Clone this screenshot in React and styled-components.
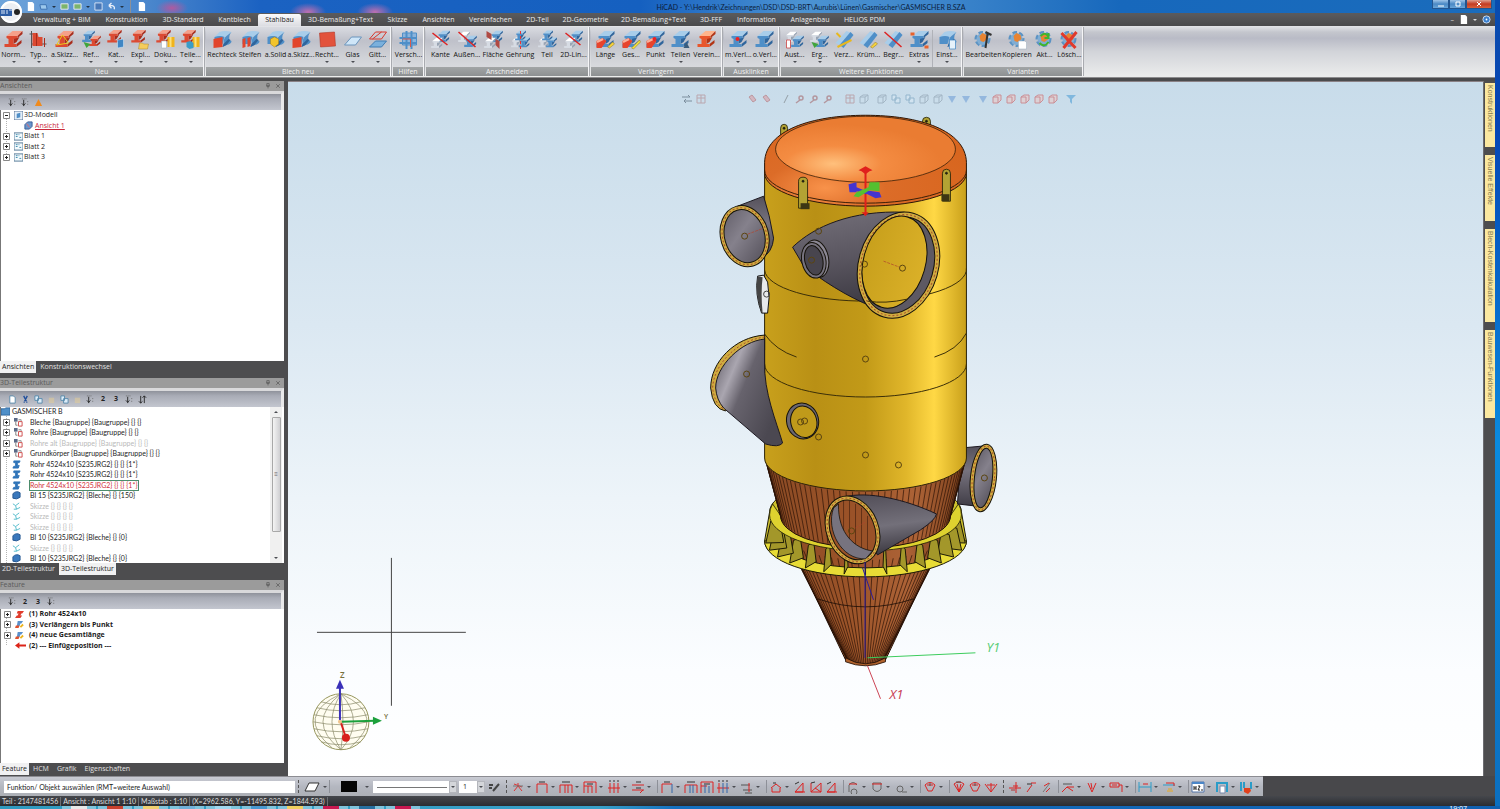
import React from 'react';
import styled, { createGlobalStyle } from 'styled-components';

const GlobalStyle = createGlobalStyle`
  * { box-sizing: border-box; }
  body {
    margin: 0;
    background: #4b4b4d;
    font-family: "Open Sans", "Noto Sans", sans-serif;
    font-size: 7px;
    line-height: 10px;
    color: #1c1c1c;
  }
  button, input, select {
    font: inherit;
    color: inherit;
    border: none;
    background: none;
    padding: 0;
    margin: 0;
    border-radius: 0;
  }
  svg { display: block; flex: none; }
`;

/* ---------- shell ---------- */

const Desktop = styled.div`
  height: 100vh;
  display: flex;
  flex-direction: column;
  overflow: hidden;
`;

const Screen = styled.div`
  flex: 1;
  min-height: 0;
  display: flex;
  background: linear-gradient(#0a4cae, #0645b4 15%, #0a8ade 55%, #0b6fc0);
`;

const Window = styled.div`
  flex: 1;
  min-width: 0;
  margin-right: 5px;
  display: flex;
  flex-direction: column;
  position: relative;
  background: #4b4b4d;
`;

const TitleBar = styled.header`
  height: 13px;
  display: flex;
  align-items: center;
  background:
    radial-gradient(ellipse 18px 9px at 308px 12px, #c070b0 0, transparent 100%),
    radial-gradient(ellipse 18px 9px at 375px 12px, #c070b0 0, transparent 100%),
    radial-gradient(ellipse 16px 8px at 172px 8px, #b05aa0 0, transparent 100%),
    linear-gradient(90deg, #6fa4da 0, #4a86cc 150px, #1b62c2 260px, #1560c0 640px, #4c93d2 800px, #3a83ca 960px, #1768bc 1120px, #1a6cbc);
`;

const QuickBar = styled.div`
  display: flex;
  align-items: center;
  gap: 4px;
  width: 200px;
  padding-left: 26px;
`;

const TitleText = styled.h1`
  flex: 1;
  margin: 0;
  padding-right: 10px;
  text-align: center;
  font-family: Lato, "Open Sans", sans-serif;
  font-size: 7px;
  font-weight: 400;
  line-height: 12px;
  color: #0c1d3a;
`;

const WindowButtons = styled.div`
  display: flex;
  width: 63px;
  height: 13px;
  align-items: flex-start;
`;

const WindowButton = styled.button`
  width: ${(p) => (p.$close ? 26 : 17)}px;
  height: 9px;
  display: flex;
  align-items: center;
  justify-content: center;
  border: 1px solid #24558f;
  border-top: none;
  background: ${(p) =>
    p.$close
      ? 'linear-gradient(#e0a090, #c43c22 50%, #d8623c)'
      : 'linear-gradient(#9fc4e8, #4a88c4 50%, #6aa6da)'};
`;

const MenuBar = styled.nav`
  height: 13px;
  padding-left: 26px;
  display: flex;
  align-items: flex-end;
  background: linear-gradient(#5b5b5d, #4a4a4c);
`;

const MenuTab = styled.button`
  width: ${(p) => p.$w}px;
  height: 12px;
  line-height: 12px;
  white-space: nowrap;
  color: ${(p) => (p.$active ? '#1c1c1c' : '#ececec')};
  background: ${(p) =>
    p.$active ? 'linear-gradient(#fbfbfb, #dcdde2)' : 'none'};
  border-radius: 2px 2px 0 0;
`;

const MenuTools = styled.div`
  margin-left: auto;
  padding-right: 4px;
  display: flex;
  align-items: center;
  gap: 5px;
  height: 13px;
  color: #d8d8d8;
`;

const Orb = styled.button`
  position: absolute;
  left: 0;
  top: 1px;
  width: 23px;
  height: 23px;
  z-index: 2;
`;

/* ---------- ribbon ---------- */

const RibbonBar = styled.div`
  height: 52px;
  padding: 1px 0;
  display: flex;
  gap: 2px;
  background: linear-gradient(#e4e5e9, #c4c6cd 12%, #b9bbc6 24%, #d2d4d9 50%, #eceded);
  border-bottom: 1px solid #8c8c8e;
`;

const RibbonGroup = styled.section`
  width: ${(p) => p.$w}px;
  display: flex;
  flex-direction: column;
  border-right: 1px solid #f5f5f7;
  box-shadow: 1px 0 0 #a9abb0;
  background: linear-gradient(#d9dbe1, #bfc1ca 28%, #cfd1d6 60%, #dfe0e3);
`;

const RibbonItems = styled.div`
  flex: 1;
  display: flex;
  padding: 3px 0 0 1px;
`;

const Caret = styled.i`
  width: 0;
  height: 0;
  flex: none;
  border: 2px solid transparent;
  border-top-color: ${(p) => p.$color || '#4a4c52'};
  border-bottom: none;
`;

const RibbonButton = styled.button`
  width: ${(p) => p.$w}px;
  display: flex;
  flex-direction: column;
  align-items: center;
  justify-content: flex-start;
  white-space: nowrap;
  color: #111;
  ${(p) => (p.$divided ? 'border-left: 1px solid #b0b2b8;' : '')}

  ${Caret} { margin-top: 1px; }
`;

const GroupLabel = styled.div`
  height: 9px;
  line-height: 9px;
  text-align: center;
  color: #f2f2f2;
  background: linear-gradient(#a2a5a6, #8d9092);
`;

/* ---------- docked panels ---------- */

const Main = styled.main`
  flex: 1;
  min-height: 0;
  display: flex;
  margin-top: 3px;
`;

const Dock = styled.aside`
  width: 288px;
  display: flex;
  flex-direction: column;
  padding-right: 4px;
  background: #4d4d4f;
`;

const Panel = styled.section`
  flex: ${(p) => p.$share} 1 0;
  min-height: 0;
  display: flex;
  flex-direction: column;
  padding-bottom: ${(p) => (p.$last ? 0 : 4)}px;
`;

const PanelHead = styled.div`
  height: 10px;
  display: flex;
  align-items: center;
  justify-content: space-between;
  padding-right: 3px;
  color: #5a5a5a;
  background: #9b9b9b;
`;

const HeadIcons = styled.span`
  display: flex;
  gap: 4px;
`;

const PanelTools = styled.div`
  height: 19px;
  flex: none;
  display: flex;
  align-items: center;
  gap: 3px;
  padding: 1px 0 0 7px;
  border-top: 3px solid #d9d9db;
  border-right: 3px solid #e9e9ea;
  background: linear-gradient(#8f929b, #a9acb6 30%, #c3c6cf);
  color: #222;
`;

const ToolButton = styled.button`
  width: 10px;
  height: 11px;
  display: flex;
  align-items: center;
  justify-content: center;
  opacity: ${(p) => (p.$faint ? 0.4 : 1)};
`;

const TreeBox = styled.div`
  flex: 1;
  min-height: 0;
  display: flex;
  overflow: hidden;
  background: #fff;
  border-left: 1px solid #777;
`;

const Tree = styled.ul`
  flex: 1;
  margin: 0;
  padding: 0;
  list-style: none;
  background: repeating-linear-gradient(#b4b4b4 0 1px, #fff 1px 2px) 5px 5px / 1px ${(p) => p.$trunk} no-repeat;
`;

/* rows alternate 10/11px, which keeps the list as dense as the native tree */
const TreeRow = styled.li`
  height: 10px;
  &:nth-child(even) { height: 11px; }
  display: flex;
  align-items: center;
  white-space: nowrap;
  padding-left: ${(p) => p.$indent || 0}px;
  font-weight: ${(p) => (p.$bold ? 700 : 400)};
  color: ${(p) => (p.$faint ? '#b9b9b9' : '#1c1c1c')};
`;

const Expander = styled.button`
  width: 11px;
  height: 10px;
  flex: none;
  display: flex;
  align-items: center;
`;

const TreeIcon = styled.span`
  width: ${(p) => p.$w || 12}px;
  flex: none;
`;

const TreeLabel = styled.span`
  line-height: 9px;
  font-family: Lato, "Open Sans", sans-serif;
  ${(p) => p.$selected && 'color: #d0303c; outline: 1px solid #4c8c6c;'}
`;

const ViewLink = styled.a`
  color: #c8283c;
  text-decoration: underline;
`;

const ScrollBar = styled.div`
  width: 12px;
  margin-right: 2px;
  display: flex;
  flex-direction: column;
  align-items: center;
  gap: 4px;
  padding: 4px 0;
  background: #f0f0f0;
`;

const UpCaret = styled(Caret)`
  border: 2px solid transparent;
  border-bottom-color: #4a4c52;
  border-top: none;
`;

const Thumb = styled.div`
  width: 9px;
  flex: 0 1 115px;
  display: flex;
  align-items: center;
  justify-content: center;
  font-size: 6px;
  color: #666;
  border: 1px solid #a8a8a8;
  border-radius: 1px;
  background: linear-gradient(90deg, #f4f4f4, #cfcfd2);
`;

const DownCaret = styled(Caret)`
  margin-top: auto;
`;

const PanelTabs = styled.div`
  height: 13px;
  flex: none;
  display: flex;
  background: #4d4d4f;
`;

const PanelTab = styled.button`
  height: 12px;
  line-height: 12px;
  padding: 0 ${(p) => (p.$active ? 2 : 4)}px;
  white-space: nowrap;
  color: ${(p) => (p.$active ? '#1c1c1c' : '#e2e2e2')};
  background: ${(p) => (p.$active ? '#f1f1f2' : 'none')};
  &:first-child { padding-left: 2px; }
`;

/* ---------- drawing area ---------- */

const Viewport = styled.div`
  flex: 1;
  min-width: 0;
  position: relative;
  border-top: 1px solid #8a8286;
  border-right: 1px solid #6c6c70;
  background: linear-gradient(#c8dcea, #dbe8f2 35%, #edf4f9 60%, #fbfdff 85%, #fff);
`;

const Scene = styled.svg`
  width: 100%;
  height: 100%;
`;

const ViewTools = styled.div`
  position: absolute;
  top: 12px;
  left: 33%;
  display: flex;
  gap: 4px;
  opacity: 0.45;
`;

const ViewTool = styled.button`
  width: 10px;
  height: 10px;
  margin-left: ${(p) => p.$gap || 0}px;
`;

const SideTabs = styled.div`
  width: 11px;
  padding: 2px 0 0 1px;
  display: flex;
  flex-direction: column;
  gap: 8px;
  background: #4d4d4f;
`;

const SideTab = styled.button`
  height: ${(p) => p.$h}px;
  writing-mode: vertical-rl;
  text-align: left;
  padding-top: 2px;
  line-height: 9px;
  font-family: "Liberation Sans", Arial, sans-serif;
  color: #857a4e;
  background: #fbe8a0;
`;

/* ---------- bottom rows ---------- */

const BottomBar = styled.div`
  height: 20px;
  display: flex;
  align-items: center;
  background: #48484b;
`;

const BottomTools = styled.div`
  height: 20px;
  display: flex;
  align-items: center;
  padding-left: 4px;
  border-top: 1px solid #8c8c92;
  background: linear-gradient(#c9cbd3, #b4b7c0 50%, #adb0b6);
`;

const Prompt = styled.input`
  width: 291px;
  height: 12px;
  padding-left: 3px;
  font-family: Lato, "Open Sans", sans-serif;
  background: #fff;
`;

const Grip = styled.i`
  width: 1px;
  height: 13px;
  margin: 0 4px 0 3px;
  border-left: 1px dashed #555;
`;

const Separator = styled.i`
  width: 1px;
  height: 13px;
  margin: 0 2px;
  background: #8d9098;
`;

const BarButton = styled.button`
  width: ${(p) => (p.$wide ? 24 : 16)}px;
  height: 17px;
  display: flex;
  align-items: center;
  gap: 2px;
`;

const Swatch = styled.span`
  width: 16px;
  height: 11px;
  background: #050505;
`;

const SwatchButton = styled.button`
  display: flex;
  align-items: center;
  gap: 8px;
  margin: 0 4px 0 9px;
`;

const SelectBox = styled.label`
  display: flex;
  align-items: center;
  height: 12px;
  margin-right: 2px;
  background: #fff;
`;

const Select = styled.select`
  appearance: none;
  width: ${(p) => p.$w}px;
  height: 12px;
  padding-left: 4px;
  background: ${(p) =>
    p.$line
      ? 'linear-gradient(#777, #777) 4px 6px / 70px 1px no-repeat'
      : '#fff'};
`;

const SelectArrow = styled.span`
  width: 8px;
  height: 12px;
  display: flex;
  align-items: center;
  justify-content: center;
  border: 1px solid #b4b6bc;
  background: #d4d6da;
`;

const StatusBar = styled.footer`
  height: 10px;
  display: flex;
  align-items: center;
  padding-left: 2px;
  background: linear-gradient(#45474c, #2b2d31);
  color: #dedede;
  font-family: Lato, "Open Sans", sans-serif;
  white-space: nowrap;
`;

const StatusCell = styled.span`
  padding-right: 2px;
  margin-right: 2px;
  line-height: 9px;
  border-right: 1px solid #6c6e72;
`;

const TaskBar = styled.div`
  height: 3px;
  flex: none;
  display: flex;
  gap: 2px;
  padding-left: 62px;
  overflow: hidden;
  background: linear-gradient(90deg, #2f9bc0, #38a0c8 40%, #1470c0 45%, #1060b0);
`;

const Task = styled.i`
  width: 34px;
  display: flex;
  justify-content: center;
  background: #7fc4dc;
  &::after {
    content: '';
    width: 16px;
    background: ${(p) => p.$c};
  }
`;

const Clock = styled.span`
  margin-left: auto;
  padding-right: 33px;
  color: #fff;
  line-height: 6px;
`;

/* ---------- icons ---------- */

const TONES = {
  red: ['#f5a08a', '#dc4a32', '#a82c1c'],
  blue: ['#a8cdea', '#4f8fc8', '#2f659c'],
  grey: ['#ffffff', '#d7dce4', '#98a4b4'],
  orange: ['#ffb48c', '#e8562c', '#b23414'],
};

const Beam = ({ tone = 'red', at = '' }) => {
  const [light, mid, dark] = TONES[tone];
  return (
    <g transform={at}>
      <path d="M3 6 9 1h10l-5 5z" fill={light} />
      <path d="M14 6l5-5v3l-5 4zM10 8h4l2-1-3 5-3 2zM13 14l5-4v3l-5 4z" fill={dark} />
      <path d="M3 6h11v2l-4 1v5h3v3H1v-3h4V9L3 8z" fill={mid} />
    </g>
  );
};

const Bent = ({ tone = 'blue' }) => {
  const [light, mid, dark] = TONES[tone];
  return (
    <g>
      <path d="M2 7 7 2q6-2 12 0l-5 4q-3 1-3 6z" fill={light} />
      <path d="M2 7q6-2 10 0l-2 7H2z" fill={mid} />
      <path d="M19 2l-5 4q-3 2-3 8l-1 3 4-2q5-1 5-4l-2-1q-1-5 2-8z" fill={mid} />
      <path d="M11 14l5-5 2 1-4 5-4 2z" fill={dark} />
    </g>
  );
};

const BASES = {
  beam: <Beam />,
  beamBlue: <Beam tone="blue" />,
  beamOrange: <Beam tone="orange" />,
  bent: <Bent />,
  two: (
    <g>
      <Beam tone="blue" at="scale(.7)" />
      <Beam at="translate(7 5) scale(.65)" />
    </g>
  ),
  small: <Beam at="translate(0 -1) scale(.8)" />,
  profile: (
    <g>
      <path d="M3 1v17M1 4h7M3 14h15" stroke="#555" fill="none" />
      <path d="M4 3h5l1 4h4v9H4z" fill="#dc4a32" />
      <path d="M8 3v13M16 8v9" stroke="#a82c1c" />
    </g>
  ),
  cut: (
    <g>
      <Beam tone="blue" at="translate(6 0) scale(.7)" />
      <Beam tone="grey" at="translate(0 7) scale(.65)" />
      <path d="M2 3l15 12" stroke="#d22" strokeWidth="1.5" />
    </g>
  ),
  cross: (
    <g>
      <Beam tone="grey" at="translate(0 1) scale(.65)" />
      <Beam tone="blue" at="translate(6 5) scale(.7)" />
    </g>
  ),
  face: (
    <g>
      <Beam tone="blue" at="translate(6 0) scale(.7)" />
      <Beam tone="grey" at="translate(0 7) scale(.65)" />
      <path d="M3 1l5 3v6L3 7zM12 9l4 2v8l-4-4z" fill="#b04a44" />
    </g>
  ),
  joint: (
    <g>
      <Beam tone="grey" at="translate(0 7) scale(.6)" />
      <Beam tone="blue" at="translate(8 7) scale(.6)" />
      <Beam tone="blue" at="translate(4 0) scale(.6)" />
    </g>
  ),
  half: (
    <g>
      <Beam tone="blue" />
      <path d="M1 11l6-3 4 3-5 7H1z" fill="#e8442c" />
      <path d="M1 11l6-3 1 2-6 3z" fill="#f8b09c" />
    </g>
  ),
  gear: (
    <g>
      <circle cx="9" cy="9" r="6" fill="none" stroke="#5b93c4" strokeWidth="4" strokeDasharray="4 2" />
      <circle cx="9" cy="9" r="6" fill="#7fadd4" />
      <path d="M6 6l3-3 4 2 1 4-4 3-3-1z" fill="#e88432" />
    </g>
  ),
  rail: (
    <g>
      <path d="M1 13 12 1l5 2L7 16z" fill="#a8cdea" />
      <path d="M5 15 16 2l3 3L9 18z" fill="#4f8fc8" />
    </g>
  ),
};

const EXTRAS = {
  cyl: (
    <g>
      <path d="M6 11h5v7H6z" fill="#fff" stroke="#9ab" strokeWidth=".5" />
      <path d="M12 7h7v10h-7z" fill="#f0b41c" />
      <path d="M14 7h2v10h-2z" fill="#fce07c" />
    </g>
  ),
  gem: (
    <g>
      <path d="M12 7h7v10h-7z" fill="#f0b41c" />
      <path d="M14 7h2v10h-2z" fill="#fce07c" />
      <path d="M6 12l4-1 3 2v5l-4 1-3-2z" fill="#3a9cc8" />
    </g>
  ),
  doc: <path d="M11 11h6l2 1v7h-8z" fill="#fff" stroke="#9ab" strokeWidth=".5" />,
  sheet: <path d="M11 10l6-1v8l-6 1z" fill="#3f86c4" stroke="#cfe3f4" strokeWidth=".6" />,
  folder: <path d="M9 13h3l1 1h5l-1 5H8z" fill="#f4cc5c" stroke="#a8862c" strokeWidth=".5" />,
  redBox: <path d="M1 9l9-2v10l-9 1z" fill="#e2452c" />,
  redPair: <path d="M2 9l3-1v9l-3 1zM7 8l3-1v9l-3 1z" fill="#e2452c" />,
  yellowBox: <path d="M5 9l4-2 4 2v5l-4 3-4-3z" fill="#f2c42c" stroke="#a87c14" strokeWidth=".5" />,
  sketch: <path d="M2 15L8 5l6 8z" fill="none" stroke="#e8c81c" />,
  pen: <path d="M12 17l5-5 2 2-5 4z" fill="#f6d23c" stroke="#8c7420" strokeWidth=".5" />,
  longPen: <path d="M10 18l8-8 1 2-7 7z" fill="#f6e23c" stroke="#8c7420" strokeWidth=".5" />,
  dot: <circle cx="9" cy="9" r="2" fill="#e22" />,
  saw: <path d="M13 18l3-6 3 6z" fill="#3b5c7c" />,
  slash: <path d="M1 2l17 15" stroke="#d22" strokeWidth="1.5" />,
  dash: <path d="M10 1v18" stroke="#e33" strokeDasharray="3 2" />,
  rod: <path d="M2 3l4 4M3 17l14-7" stroke="#e8b81c" strokeWidth="2" />,
  tool: <path d="M12 2l6 3M14 4l-2 14" stroke="#333" strokeWidth="2" />,
  arrows: <path d="M6 6q5-5 8 1M14 12q-4 6-9 1M14 3v5h-4" stroke="#3fb52c" strokeWidth="2" fill="none" />,
  cross: <path d="M2 3l14 15M17 2L4 18" stroke="#e03a2c" strokeWidth="3" />,
  green: <path d="M2 12l3 6 4-4z" fill="#3fa53c" />,
  bottle: <path d="M2 10h4v8H2z" fill="#fff" stroke="#c44" strokeWidth=".8" />,
  clamp: <path d="M1 4h4M15 17h4" stroke="#e8622c" strokeWidth="3" />,
  page: <path d="M12 10h6v9h-6z" fill="#e6f2fb" stroke="#4f8fc8" strokeWidth=".8" />,
};

const SINGLE = {
  plateRed: <path d="M2 3l15-1 1 14-15 1z" fill="#e2523c" stroke="#a82c1c" strokeWidth=".5" />,
  glass: <path d="M2 15L9 7h10l-6 8z" fill="#cfe6f8" stroke="#6a94bc" />,
  grid: (
    <g fill="none">
      <path d="M2 17l6-6h11l-5 6z" fill="#7ab0dc" stroke="#3f7cb4" />
      <path d="M2 9l6-7h11l-5 7z" stroke="#d8382c" />
      <path d="M5 9l9-7" stroke="#d8382c" />
    </g>
  ),
  mesh: (
    <g fill="none">
      <path d="M4 3h14v12H4z" fill="#8cb4dc" stroke="#4f8fc8" />
      <path d="M1 8h17M1 13h17M8 1v18M13 1v18" stroke="#4f8fc8" strokeWidth="2" />
      <path d="M4 9h8v8" stroke="#d85a4c" />
    </g>
  ),
};

const RibbonIcon = ({ base, extra }) => (
  <svg width="21" height="20" viewBox="0 0 20 20" aria-hidden="true">
    {SINGLE[base] || BASES[base]}
    {EXTRAS[extra]}
  </svg>
);

/* dimension glyphs of the lower toolbar, drawn on a 14px grid */
const DIMS = {
  star: [['#d33', 'M3 11l4-5 4 5M3 4l8 3M7 6v-3'], ['#777', 'M2 6h10']],
  span: [['#d22', 'M2 13V4h10v9'], ['#333', 'M4 2h6']],
  spanBlue: [['#d22', 'M2 13V4h10'], ['#36a', 'M12 4v9'], ['#333', 'M4 2h6']],
  chain: [['#d22', 'M1 13V5h12v8M6 13V5M9 13V5'], ['#333', 'M3 2h8']],
  chainBlue: [['#d22', 'M1 13V5h12v8'], ['#36a', 'M6 13V5M9 13V5'], ['#333', 'M3 2h8']],
  stack: [['#d22', 'M1 13V2h12v11M1 6h8v7M5 13V6'], ['#333', 'M4 4h6']],
  stackBlue: [['#d22', 'M1 13V2h12v11M1 6h6'], ['#36a', 'M5 13V5M9 13V6'], ['#333', 'M4 4h6']],
  ordinate: [['#d22', 'M1 8h12M3 13V3M7 13V3M11 13V3'], ['#333', 'M2 1h2M6 1h2M10 1h2']],
  ordinateBlue: [['#d22', 'M1 8h12M3 13V3'], ['#36a', 'M7 13V3M11 13V3'], ['#333', 'M2 1h2M6 1h2M10 1h2']],
  levels: [['#d22', 'M1 5h12M1 10h12M9 13l3-3'], ['#333', 'M5 2h5M5 8h5']],
  levelsDark: [['#555', 'M1 5h9M3 10h9M5 13h7'], ['#d22', 'M9 3v9']],
  house: [['#d22', 'M2 8l5-4 5 4M3 8v4h8V8'], ['#333', 'M4 3h3']],
  slope: [['#d22', 'M2 12l8-9v9zM2 12h10'], ['#333', 'M2 4l4-2']],
  slopes: [['#d22', 'M2 3v9h10V3L2 12M6 8l6 4'], ['#333', 'M2 3l4-1']],
  radius: [['#666', 'M3 12V5q4-5 8 0M5 12a3 3 0 1 0 6 0 3 3 0 1 0-6 0'], ['#d22', 'M3 4h8']],
  drum: [['#666', 'M3 3h8v6q-4 5-8 0z'], ['#d22', 'M2 4h10']],
  lens: [['#666', 'M3 9a3 3 0 1 0 6 0 3 3 0 1 0-6 0M8 12h5']],
  angle: [['#d22', 'M2 5q5-5 10 0l-3 6H5zM4 5h6'], ['#555', 'M7 3v3']],
  fan: [['#d22', 'M2 4q5-4 10 0L7 12zM5 4l2 8 2-8'], ['#555', 'M4 2h5']],
  fanOpen: [['#d22', 'M1 4l6 8 6-8M7 12V3M3 5h8']],
  weld: [['#d22', 'M1 8h12M8 2v11M5 6h5'], ['#a33', 'M3 10h4']],
  rough: [['#d22', 'M3 12l5-7M7 3h5'], ['#333', 'M3 4h5']],
  slant: [['#777', 'M3 12l7-9'], ['#d22', 'M6 12l4-4M4 6l5-3']],
  leader: [['#d22', 'M1 12l5-5h7M6 7l6 4'], ['#555', 'M2 4h9']],
  vee: [['#d22', 'M3 3l4 9 4-9M6 3l1 6']],
  flag: [['#d22', 'M1 3h9v4H1zM10 5h3v7'], ['#d22', 'M3 5h5']],
  edit: [['#2a9cc8', 'M1 12V2M13 12V2M1 7h12'], ['#d22', 'M5 4h5']],
  editPen: [['#2a9cc8', 'M1 5h12'], ['#e8a81c', 'M5 11h6M6 9h4'], ['#d22', 'M4 3h8v3']],
};

const FILLED_DIMS = {
  field: (
    <g>
      <path d="M1 2h12v10H1z" fill="#fff" stroke="#57a" />
      <path d="M1 2h12v2H1z" fill="#4a86c8" />
      <path d="M3 6v4M3 8h2M5 6v4M7 6h2l-2 4h2M10 10h2" stroke="#222" />
    </g>
  ),
  frame: (
    <g>
      <path d="M2 12V3h10v9" stroke="#2a9cc8" strokeWidth="2" />
      <path d="M5 6h5v7H5z" fill="#fff" stroke="#78a" />
    </g>
  ),
  stamp: (
    <g>
      <path d="M2 11V2M12 9V2M5 8V2" stroke="#2a9cc8" strokeWidth="2" />
      <path d="M5 8h6l1 3-3 3-4-2z" fill="#e0401c" />
    </g>
  ),
};

const DimIcon = ({ kind }) => (
  <svg width="14" height="14" viewBox="0 0 14 14" fill="none">
    {FILLED_DIMS[kind] ||
      DIMS[kind].map(([stroke, d]) => <path key={d} d={d} stroke={stroke} />)}
  </svg>
);

const Mini = ({ kind, size = 9 }) => (
  <svg width={size} height={size} viewBox="0 0 10 10" fill="none" aria-hidden="true">
    {{
      collapse: (
        <g>
          <path d="M1 1h5M7 4h2M7 7h2" stroke="#666" strokeDasharray="1 1" />
          <path d="M3 2v7M1 6l2 2 2-2" stroke="#222" />
        </g>
      ),
      cone: <path d="M5 1l3 6 1 2H1l1-2z" fill="#f08a1c" />,
      doc: <path d="M2 1h4l2 2v6H2z" fill="#fff" stroke="#58a" />,
      scissors: <path d="M3 1l3 6M7 1L4 7M3 8h1M6 8h1" stroke="#1f4f9c" strokeWidth="1.5" />,
      copy: <path d="M1 1h4v5H1zM4 4h5v5H4z" fill="#dcecf8" stroke="#58a" />,
      bag: <path d="M2 3h6v6H2z" fill="#f4d488" />,
      sort: <path d="M3 1v8M1 7l2 2 2-2M7 9V1M5 3l2-2 2 2" stroke="#222" />,
      model: (
        <g>
          <path d="M0 0h10v10H0z" fill="#e4eef8" stroke="#4a6a90" />
          <path d="M3 3l4-1v5l-4 1z" fill="#4f8fc8" />
        </g>
      ),
      view: (
        <g>
          <path d="M1 4l3-3h5v5L6 9H1z" fill="#6a96cc" stroke="#345a94" />
          <path d="M3 3l3 4" stroke="#e66" />
        </g>
      ),
      sheet: (
        <g>
          <path d="M0 1h10v8H0z" fill="#f4fafd" stroke="#4a7090" />
          <path d="M2 3h2M2 5h2M6 6h2M5 3h1" stroke="#38a" />
        </g>
      ),
      root: <path d="M0 2h4l1-1h5v8H0z" fill="#4f8fc8" stroke="#2f659c" />,
      group: (
        <g>
          <path d="M0 0h4v4H0z" fill="#5a6a88" />
          <path d="M5 4h4v5H5z" fill="#fff" stroke="#c44" />
          <path d="M2 4v4h2M5 2h3v1" stroke="#777" />
        </g>
      ),
      beam: <path d="M2 1h7L8 3H6v3h2L7 9H1l1-2h2V3H2z" fill="#2f74b8" stroke="#2f74b8" />,
      plate: <path d="M1 3q4-4 8-1v5q-4 3-8 1z" fill="#3a78bc" stroke="#245690" />,
      sketch: <path d="M1 2l3 2 4-3M4 4l1 4 4-2M2 8l3 0" stroke="#4cb8c8" />,
      beamRed: <path d="M3 1h7L8 4H7L6 6h2L6 9H0l2-3h1l1-2H2z" fill="#e03c2c" />,
      stretch: (
        <g>
          <path d="M3 1h6L7 4H6L5 7H2z" fill="#5a90cc" />
          <path d="M1 6h4L4 9H0z" fill="#e0502c" />
          <path d="M6 8l3-3" stroke="#ecb41c" strokeWidth="2" />
        </g>
      ),
      insert: <path d="M0 5l4-3v2h6v2H4v2z" fill="#dc2418" />,
      pin: <path d="M3 1h4v4H3zM2 5h6M5 5v4" stroke="#4c4c4c" />,
      close: <path d="M2 2l6 6M8 2L2 8" stroke="#4c4c4c" />,
      disk: <path d="M1 1h8v8H1z" fill="#4878b8" stroke="#dce8f8" />,
      save: <path d="M1 2h8v6H1z" fill="#7cb46c" stroke="#eef" />,
      undo: <path d="M2 4h4q3 1 2 4M2 4l3-3M2 4l3 3" stroke="#e8eef8" strokeWidth="1.5" />,
      page: <path d="M2 0h5l2 2v8H2z" fill="#fff" />,
      open: <path d="M1 3h7l1 5H2z" fill="#9cc8ec" stroke="#3c70b0" />,
      flow: <path d="M0 3h8M6 1l2 2M10 7H2M4 5L2 7l2 2" stroke="#234" />,
      table: <path d="M1 1h8v8H1zM1 4h8M5 1v8" stroke="#a66" />,
      eraser: <path d="M2 3l4 5 3-2-4-5z" fill="#e08a90" stroke="#a44" />,
      line: <path d="M3 9l4-8" stroke="#555" />,
      zoom: <path d="M4 4a2 2 0 1 0 4 0 2 2 0 1 0-4 0M5 6L1 9" stroke="#944" strokeWidth="1.5" />,
      wire: <path d="M1 3l3-2h5v5L6 9H1zM1 3h5v6M6 3l3-2" stroke="#789" />,
      solid: <path d="M1 2h8L5 9z" fill="#568cd0" />,
      cube: <path d="M1 3l3-2h5v5L6 9H1zM1 3h5v6" fill="#f4c4bc" stroke="#c33" />,
      filter: <path d="M0 1h10L6 5v5L4 8V5z" fill="#2a8cd0" />,
    }[kind]}
  </svg>
);

/* ---------- data ---------- */

const MENU = [
  ['Verwaltung + BIM', 72],
  ['Konstruktion', 57],
  ['3D-Standard', 56],
  ['Kantblech', 47],
  ['Stahlbau', 43],
  ['3D-Bemaßung+Text', 79],
  ['Skizze', 35],
  ['Ansichten', 47],
  ['Vereinfachen', 57],
  ['2D-Teil', 37],
  ['2D-Geometrie', 59],
  ['2D-Bemaßung+Text', 77],
  ['3D-FFF', 38],
  ['Information', 53],
  ['Anlagenbau', 54],
  ['HELiOS PDM', 55],
];

// [label, width, base, extra, has menu, divider before]
const RIBBON = [
  { name: 'Neu', w: 204, items: [
    ['Norm...', 25, 'beam', '', true],
    ['Typ...', 25, 'profile', '', true],
    ['a.Skizz...', 27, 'beam', 'sketch', true],
    ['Ref...', 26, 'two', 'green', true],
    ['Kat...', 24, 'small', 'sheet', true],
    ['Expl...', 25, 'small', 'folder', true],
    ['Doku...', 25, 'small', 'cyl', true],
    ['Teile...', 25, 'small', 'gem', true],
  ] },
  { name: 'Blech neu', w: 185, items: [
    ['Rechteck', 30, 'bent', 'redBox'],
    ['Steifen', 26, 'bent', 'redPair'],
    ['a.Solid', 25, 'bent', 'yellowBox'],
    ['a.Skizz...', 26, 'bent', 'redBox'],
    ['Recht...', 26, 'plateRed', '', true],
    ['Glas', 25, 'glass', '', true],
    ['Gitt...', 25, 'grid', '', true],
  ] },
  { name: 'Hilfen', w: 31, items: [['Versch...', 29, 'mesh', '', true]] },
  { name: 'Anschneiden', w: 163, items: [
    ['Kante', 27, 'cut', ''],
    ['Außen...', 26, 'cross', 'slash'],
    ['Fläche', 26, 'face', ''],
    ['Gehrung', 28, 'joint', 'dash'],
    ['Teil', 26, 'joint', ''],
    ['2D-Lin...', 27, 'cut', ''],
  ] },
  { name: 'Verlängern', w: 131, items: [
    ['Länge', 27, 'half', 'pen'],
    ['Ges...', 24, 'half', 'longPen'],
    ['Punkt', 25, 'half', 'dot'],
    ['Teilen', 25, 'beamBlue', 'saw', true],
    ['Verein...', 27, 'beamOrange', ''],
  ] },
  { name: 'Ausklinken', w: 55, items: [
    ['m.Verl...', 27, 'beamBlue', 'dot', true],
    ['o.Verl...', 27, 'beamBlue', '', true],
  ] },
  { name: 'Weitere Funktionen', w: 181, items: [
    ['Aust...', 25, 'cross', 'bottle', true],
    ['Erg...', 25, 'cross', 'green', true],
    ['Verz...', 24, 'rail', 'rod'],
    ['Krüm...', 25, 'rail', 'pen'],
    ['Begr...', 25, 'rail', 'slash'],
    ['Extras', 26, 'beamBlue', 'clamp', true],
    ['Einst...', 29, 'bent', 'page', true, true],
  ] },
  { name: 'Varianten', w: 119, items: [
    ['Bearbeiten', 37, 'gear', 'tool'],
    ['Kopieren', 30, 'gear', 'doc'],
    ['Akt...', 25, 'gear', 'arrows'],
    ['Lösch...', 25, 'gear', 'cross'],
  ] },
];

const PARTS = [
  ['Bleche {Baugruppe} {Baugruppe} {} {}', 'group'],
  ['Rohre {Baugruppe} {Baugruppe} {} {}', 'group'],
  ['Rohre alt {Baugruppe} {Baugruppe} {} {}', 'group', 'faint'],
  ['Grundkörper {Baugruppe} {Baugruppe} {} {}', 'group'],
  ['Rohr 4524x10 {S235JRG2} {} {} {1*}', 'beam'],
  ['Rohr 4524x10 {S235JRG2} {} {} {1*}', 'beam'],
  ['Rohr 4524x10 {S235JRG2} {} {} {1*}', 'beam', 'selected'],
  ['Bl 15 {S235JRG2} {Bleche} {} {150}', 'plate'],
  ['Skizze {} {} {} {}', 'sketch', 'faint'],
  ['Skizze {} {} {} {}', 'sketch', 'faint'],
  ['Skizze {} {} {} {}', 'sketch', 'faint'],
  ['Bl 10 {S235JRG2} {Bleche} {} {0}', 'plate'],
  ['Skizze {} {} {} {}', 'sketch', 'faint'],
  ['Bl 10 {S235JRG2} {Bleche} {} {0}', 'plate'],
];

const FEATURES = [
  ['(1) Rohr 4524x10', 'beamRed'],
  ['(3) Verlängern bis Punkt', 'stretch'],
  ['(4) neue Gesamtlänge', 'stretch'],
];

// "+" after a name adds the drop-down arrow
const DIM_BAR = [
  'star+', 'span+', 'chain+', 'stack+', 'ordinate+', 'levels+', '|',
  'spanBlue+', 'chainBlue', 'stackBlue', 'ordinateBlue+', 'levelsDark+', '|',
  'house+', 'slope', 'slopes', 'slope', '|',
  'radius+', 'drum+', 'lens+', '|', 'angle+', '|', 'fan', 'angle', 'fanOpen', ':',
  'weld', 'rough', 'slant', '|', 'leader+', 'vee+', 'flag+', '|',
  'edit+', 'editPen+', '|', 'field+', 'frame+', 'stamp+',
];

const VIEW_TOOLS = [
  ['flow'], ['table'], ['eraser', 37], ['eraser'], ['line', 6], ['zoom'], ['zoom'], ['zoom'],
  ['table', 8], ['wire'], ['wire', 4], ['copy'], ['copy'], ['wire'], ['wire'], ['solid'], ['solid'],
  ['solid', 3], ['cube'], ['cube'], ['cube'], ['cube'], ['cube'], ['filter', 4],
];

const SIDE = [
  ['Konstruktionen', 64],
  ['Visuelle Effekte', 66],
  ['Blech-Kostenkalkulation', 93],
  ['Bauwesen-Funktionen', 88],
];

/* ---------- model ---------- */

const CX = 866;
const onEllipse = (cy, rx, ry, a) => [
  Math.round((CX + rx * Math.cos(a)) * 10) / 10,
  Math.round((cy + ry * Math.sin(a)) * 10) / 10,
];
const range = (n) => Array.from({ length: n }, (_, i) => i);

const Stripes = ({ top, bottom, count }) => (
  <path
    d={range(count + 1)
      .map((i) => {
        const a = (Math.PI * i) / count;
        return `M${onEllipse(...top, a)}L${onEllipse(...bottom, a)}`;
      })
      .join('')}
    stroke="#2c1206"
    strokeWidth=".7"
    fill="none"
  />
);

/* radial plates between the two rings of the support */
const Gussets = () =>
  range(15).map((i) => {
    const a = Math.PI * (0.02 + (0.96 * i) / 14);
    const points = [
      onEllipse(519, 95, 33, a),
      onEllipse(519, 86, 29, a),
      onEllipse(541, 82, 26, a),
      onEllipse(541, 100, 34, a),
    ];
    return (
      <polygon
        key={i}
        points={points.join(' ')}
        fill="#a3972a"
        stroke="#1c1a06"
        strokeWidth="1"
      />
    );
  });

const Flange = ({ x, y, rx, ry, tilt, fill, band = 4 }) => (
  <g transform={`translate(${x} ${y}) rotate(${tilt})`}>
    <ellipse rx={rx} ry={ry} fill="#d0ac40" stroke="#15120a" />
    <ellipse rx={rx - band / 2} ry={ry - band / 2} fill="none" stroke="#a8502c" strokeWidth="1" strokeDasharray="2 2" />
    <ellipse rx={rx - band} ry={ry - band} fill={fill} stroke="#15120a" />
  </g>
);

const Lug = ({ x, y, h, w = 9 }) => (
  <g stroke="#1c1a06" strokeWidth=".8">
    <path d={`M${x} ${y + h}V${y + 4}q0-4 ${w / 2}-4t${w / 2} 4V${y + h}z`} fill="#b3a334" />
    <circle cx={x + w / 2} cy={y + 4} r="1" fill="#222" />
  </g>
);

const MARKS = [
  [745, 236], [819, 231], [865, 264], [903, 268], [866, 359], [747, 374], [801, 422],
  [805, 421], [819, 437], [866, 455], [899, 465], [985, 478], [852, 531], [812, 260],
];

const Vessel = () => (
  <g strokeLinejoin="round">
    {/* rear lugs */}
    <Lug x={781} y={124} h={14} w={7} />
    <Lug x={923} y={117} h={12} w={8} />

    {/* ring skirt behind the cone */}
    <path d="M770 512L765 541A101 34 0 0 0 967 541L962 512A96 34 0 0 0 770 512z" fill="#cfc22e" stroke="#1c1a06" />

    {/* lower cone */}
    <path d="M784 530L846 660q20 10 40 0L948 530z" fill="url(#rust)" stroke="#1c0d05" />
    <Stripes top={[534, 81, 26]} bottom={[658, 19, 6]} count={36} />
    <path d="M818 599q48 16 96 0" fill="none" stroke="#1c0d05" strokeWidth=".8" />
    <path d="M846 658q20 12 40 0v4q-20 8-40 0z" fill="#b0622c" stroke="#1c0d05" strokeWidth=".8" />

    {/* support ring */}
    <path
      d="M765 541A101 36 0 0 0 967 541L951 541A85 27 0 0 1 781 541z"
      fill="#e8dc36"
      stroke="#1c1a06"
    />
    <Gussets />
    <path
      d="M773 504Q770 509 770 515A96 36 0 0 0 962 515Q962 509 959 504L948 520H784z"
      fill="#ded22f"
      stroke="#1c1a06"
      strokeWidth=".8"
    />

    {/* right nozzle */}
    <path d="M962 448l22-2v61l-26-3z" fill="url(#tube)" stroke="#1c1820" />
    <Flange x={984} y={478} rx={13} ry={34} tilt={6} fill="url(#bore)" />

    {/* upper cone */}
    <path d="M766 460L781 516A85 32 0 0 0 951 516L966 460z" fill="url(#rust)" stroke="#1c0d05" />
    <Stripes top={[459, 100, 33]} bottom={[515, 85, 32]} count={48} />

    {/* shell */}
    <path d="M765 170V458A101 33 0 0 0 967 458V170z" fill="url(#shell)" stroke="#2a2208" />
    <g fill="none" stroke="#3a2e08">
      <path d="M765 270A101 32 0 0 0 967 268M765 364A101 33 0 0 0 967 364" />
      <path d="M765 334Q776 350 797 357M967 333Q958 350 935 357" />
    </g>

    {/* dome */}
    <path d="M765 173V162C766 130 812 115 866 115S966 130 967 162V173A101 33 0 0 1 765 173z" fill="url(#dome)" stroke="#2a1608" />
    <path d="M765 170A101 33 0 0 0 967 170" fill="none" stroke="#3a2008" />
    <ellipse cx="866" cy="149" rx="90" ry="33" fill="url(#cap)" stroke="#3a2008" strokeWidth=".8" />
    <Lug x={799} y={177} h={31} />
    <path d="M801 203h9v6h-9z" fill="#3c3614" />
    <Lug x={943} y={169} h={32} w={8} />
    <path d="M942 194h8v7h-8z" fill="#3c3614" />

    {/* upper left nozzle */}
    <path d="M738 206L764 196Q770 214 774 238Q773 252 762 258L745 264z" fill="url(#tube)" stroke="#1c1820" />
    <Flange x={745} y={236} rx={24} ry={31} tilt={-16} fill="url(#bore)" />

    {/* inspection cover */}
    <path d="M758 276q-3 18 4 37l6 0q3-16 0-31l-4-7z" fill="#e8eaec" stroke="#111" />
    <path d="M758 276q-3 18 4 37l1 0q-2-20 0-36z" fill="#444" />
    <circle cx="767" cy="294" r="3" fill="none" stroke="#444" />

    {/* lower left nozzle */}
    <path d="M765 335C735 337 711 362 711 388Q713 409 726 411L765 350z" fill="#d0ac40" stroke="#15120a" />
    <path d="M765 337C738 340 714 364 713 388Q715 404 724 409" fill="none" stroke="#a8502c" strokeDasharray="2 2" />
    <path d="M765 339C742 341 716 366 716 388Q717 400 724 408L766 444Q779 448 783 443C777 422 764 392 765 362z" fill="url(#tubeDiag)" stroke="#1c1820" />

    {/* large nozzle */}
    <path d="M793 247C815 226 852 210 905 212L872 306C850 298 818 278 803 264z" fill="url(#tubeBig)" stroke="#1c1820" />
    <Flange x={899} y={265} rx={40} ry={54} tilt={16} fill="#5d5963" band={5} />
    <ellipse cx="895" cy="262" rx="31" ry="47" transform="rotate(16 895 262)" fill="url(#shellIn)" stroke="#15120a" />
    <path d="M868 301Q885 304 908 299" fill="none" stroke="#3a2e08" />
    <g transform="rotate(-12 815 259)">
      <ellipse cx="817" cy="259" rx="12" ry="19" fill="#8b8793" stroke="#15120a" />
      <ellipse cx="814" cy="260" rx="12" ry="18" fill="#77737f" stroke="#15120a" />
      <ellipse cx="814" cy="260" rx="9" ry="15" fill="#48454e" stroke="#15120a" />
    </g>

    {/* small ring */}
    <g transform="rotate(-14 803 421)">
      <ellipse cx="803" cy="421" rx="16" ry="18" fill="#6a6671" stroke="#15120a" />
      <ellipse cx="804" cy="422" rx="13" ry="16" fill="#c09a1a" stroke="#15120a" />
    </g>

    {/* front nozzle */}
    <path d="M845 497C868 491 905 499 937 514Q936 520 921 530L878 555z" fill="url(#tubeFront)" stroke="#1c1820" />
    <Flange x={853} y={530} rx={26} ry={35} tilt={-22} fill="#9a5228" />
    <path d="M844 501v40M850 501v45M856 504v46M862 508v42M868 516v34" stroke="#4a2410" strokeWidth=".7" />
    <path d="M834 508C826 530 842 560 866 559L873 551C856 549 838 534 839 504z" fill="#77737f" stroke="#15120a" strokeWidth=".8" />

    <g fill="none" stroke="#5a4410">
      {MARKS.map(([x, y]) => (
        <circle key={`${x}-${y}`} cx={x} cy={y} r="3" />
      ))}
    </g>
    <path d="M748 234l16-6M884 261l16 6M856 528l10-6" stroke="#b0442c" strokeWidth=".7" strokeDasharray="3 1" />
  </g>
);

const Triad = () => (
  <g>
    <path d="M866 170v43" stroke="#e0201c" strokeWidth="2" />
    <path d="M859 170l7-4 7 4-3 1-4 3-4-3zM862 212h7l-3 4z" fill="#e0201c" />
    <path d="M849 184l8-2v10h-7zM857 187l10 4v3l-10-3z" fill="#4434d0" />
    <path d="M866 190l14 2 2 5-6 1-10-5z" fill="#4434d0" />
    <path d="M880 182v9l-10-1-11 7-5-1 3-4 12-5 1-5z" fill="#54c030" />
  </g>
);

const Globe = () => (
  <g fill="none">
    <circle cx="341" cy="722" r="28" fill="#fffdf0" stroke="#96965c" />
    <g stroke="#8a8a68" strokeWidth=".7">
      {[-18, -9, 2].map((x) => (
        <path key={x} d={`M341 694Q${341 + x * 2} 722 341 750`} />
      ))}
      <path d="M341 694Q366 722 341 750M341 694Q388 716 350 748M341 694Q294 716 332 748" />
      {[-20, -14, -7, 0, 7, 14, 20].map((y) => {
        const half = Math.round(Math.sqrt(784 - y * y));
        return <path key={y} d={`M${341 - half} ${722 + y}q${half} 6 ${half * 2} 0`} />;
      })}
    </g>
    <path d="M340 722v-36" stroke="#3a30b8" strokeWidth="2" />
    <path d="M336 689l4-9 4 9z" fill="#3a30b8" />
    <path d="M341 722l34-1" stroke="#1ca03c" strokeWidth="2" />
    <path d="M373 717l9 4-9 4z" fill="#1ca03c" />
    <path d="M341 723l4 12" stroke="#d8201c" strokeWidth="2" />
    <circle cx="346" cy="738" r="4" fill="#d8201c" />
    <circle cx="340" cy="722" r="2" fill="#f0c48c" />
  </g>
);

const SceneText = styled.text`
  font-family: "Open Sans", sans-serif;
  font-size: ${(p) => p.$size}px;
  font-style: ${(p) => (p.$slanted ? 'italic' : 'normal')};
  font-weight: ${(p) => (p.$slanted ? 400 : 600)};
`;

const ModelScene = () => (
  <Scene viewBox="288 82 1196 694" role="img" aria-label="GASMISCHER B">
    <defs>
      <linearGradient id="shell">
        <stop offset="0" stopColor="#c8a01c" />
        <stop offset=".25" stopColor="#b99015" />
        <stop offset=".5" stopColor="#c29a18" />
        <stop offset=".7" stopColor="#e0b62a" />
        <stop offset=".84" stopColor="#ffd845" />
        <stop offset="1" stopColor="#c9a01a" />
      </linearGradient>
      <linearGradient id="shellIn">
        <stop offset="0" stopColor="#c8a01c" />
        <stop offset="1" stopColor="#dab028" />
      </linearGradient>
      <linearGradient id="rust">
        <stop offset="0" stopColor="#8a4a24" />
        <stop offset=".4" stopColor="#9c5429" />
        <stop offset=".75" stopColor="#ac6236" />
        <stop offset="1" stopColor="#7e421e" />
      </linearGradient>
      <radialGradient id="dome" cx=".3" cy=".8" r=".75">
        <stop offset="0" stopColor="#f8924a" />
        <stop offset=".4" stopColor="#dc6c28" />
        <stop offset="1" stopColor="#d8661f" />
      </radialGradient>
      <radialGradient id="cap" cx=".32" cy=".72" r=".6">
        <stop offset="0" stopColor="#ffc07c" />
        <stop offset=".45" stopColor="#f48c42" />
        <stop offset="1" stopColor="#ea7c32" />
      </radialGradient>
      <linearGradient id="tube" x2="0" y2="1">
        <stop offset="0" stopColor="#55515b" />
        <stop offset=".4" stopColor="#77737e" />
        <stop offset="1" stopColor="#3f3c45" />
      </linearGradient>
      <linearGradient id="tubeDiag" x1="0" y1=".1" x2=".9" y2=".7">
        <stop offset="0" stopColor="#5d5963" />
        <stop offset=".3" stopColor="#aaa6b0" />
        <stop offset=".5" stopColor="#67636d" />
        <stop offset="1" stopColor="#4b4851" />
      </linearGradient>
      <linearGradient id="tubeBig" x1=".3" y1="0" x2=".5" y2="1">
        <stop offset="0" stopColor="#716d77" />
        <stop offset=".5" stopColor="#5a5660" />
        <stop offset="1" stopColor="#3d3a43" />
      </linearGradient>
      <linearGradient id="tubeFront" x1=".4" y1="0" x2=".6" y2="1">
        <stop offset="0" stopColor="#55515b" />
        <stop offset=".5" stopColor="#73707a" />
        <stop offset="1" stopColor="#37343c" />
      </linearGradient>
      <linearGradient id="bore" x2=".6" y2="1">
        <stop offset="0" stopColor="#615d67" />
        <stop offset=".5" stopColor="#85818c" />
        <stop offset="1" stopColor="#5f5b65" />
      </linearGradient>
    </defs>

    <Vessel />
    <Triad />

    <path d="M865.5 562v96M863 568l11 32" stroke="#2c1c9c" fill="none" />
    <path d="M868 658l108-5" stroke="#3ccc5c" />
    <path d="M868 666l13 33" stroke="#cc4454" />
    <SceneText $size={13} $slanted x="987" y="652" fill="#58cc74">Y1</SceneText>
    <SceneText $size={13} $slanted x="890" y="699" fill="#c83c54">X1</SceneText>

    <path d="M391.5 558v148M317 632.5h149" stroke="#444" />
    <Globe />
    <SceneText $size={8} x="340" y="678" fill="#77703c">Z</SceneText>
    <SceneText $size={7} x="384" y="719" fill="#77703c">Y</SceneText>
  </Scene>
);

/* ---------- parts of the window ---------- */

const PlusBox = ({ open }) => (
  <svg width="7" height="7" viewBox="0 0 7 7" fill="none">
    <path d="M.5.5h6v6h-6z" fill="#fff" stroke="#888" />
    <path d={open ? 'M2 3.5h3' : 'M2 3.5h3M3.5 2v3'} stroke="#222" />
  </svg>
);

const DockPanel = ({ title, share, last, tools, tabs, active, children }) => (
  <Panel $share={share} $last={last}>
    <PanelHead>
      {title}
      <HeadIcons>
        <Mini kind="pin" size={6} />
        <Mini kind="close" size={6} />
      </HeadIcons>
    </PanelHead>
    <PanelTools>
      {tools.map((tool, i) => (
        <ToolButton key={i} $faint={tool === 'bag'} aria-label={`${title} ${i + 1}`}>
          {tool.length === 1 ? <b>{tool}</b> : <Mini kind={tool} />}
        </ToolButton>
      ))}
    </PanelTools>
    <TreeBox>{children}</TreeBox>
    <PanelTabs>
      {tabs.map((tab) => (
        <PanelTab key={tab} $active={tab === active}>{tab}</PanelTab>
      ))}
    </PanelTabs>
  </Panel>
);

const Ribbon = () => (
  <RibbonBar>
    {RIBBON.map((group) => (
      <RibbonGroup key={group.name} $w={group.w}>
        <RibbonItems>
          {group.items.map(([label, w, base, extra, menu, divided]) => (
            <RibbonButton key={label} $w={w} $divided={divided}>
              <RibbonIcon base={base} extra={extra} />
              {label}
              {menu && <Caret />}
            </RibbonButton>
          ))}
        </RibbonItems>
        <GroupLabel>{group.name}</GroupLabel>
      </RibbonGroup>
    ))}
  </RibbonBar>
);

const DimBar = () =>
  DIM_BAR.map((entry, i) => {
    if (entry === '|') return <Separator key={i} />;
    if (entry === ':') return <Grip key={i} />;
    const wide = entry.endsWith('+');
    const kind = entry.replace('+', '');
    return (
      <BarButton key={i} $wide={wide} aria-label={kind}>
        <DimIcon kind={kind} />
        {wide && <Caret />}
      </BarButton>
    );
  });

const App = () => (
  <Desktop>
    <GlobalStyle />
    <Screen>
      <Window>
        <Orb aria-label="HiCAD">
          <svg width="23" height="23" viewBox="0 0 23 23">
            <circle cx="11" cy="11" r="11" fill="#eceef2" />
            <circle cx="11" cy="11" r="10" fill="none" stroke="#fff" strokeWidth="2" />
            <path d="M0 8h12v7H0z" fill="#2c5ca4" />
            <path d="M2 9v4M4 9v4M7 9v4M9 9h3" stroke="#dce8f8" />
            <circle cx="17" cy="11" r="3" fill="#222" />
          </svg>
        </Orb>
        <TitleBar>
          <QuickBar>
            <Mini kind="page" />
            <Mini kind="open" />
            <Caret $color="#234" />
            <Mini kind="save" />
            <Mini kind="save" />
            <Caret $color="#234" />
            <Mini kind="disk" />
            <Mini kind="undo" />
            <Caret $color="#234" />
            <Separator />
            <Mini kind="page" />
          </QuickBar>
          <TitleText>
            HiCAD - Y:\Hendrik\Zeichnungen\DSD\DSD-BRT\Aurubis\Lünen\Gasmischer\GASMISCHER B.SZA
          </TitleText>
          <WindowButtons>
            <WindowButton aria-label="Minimieren">
              <svg width="6" height="5"><path d="M0 4h6" stroke="#fff" /></svg>
            </WindowButton>
            <WindowButton aria-label="Verkleinern">
              <svg width="6" height="6"><path d="M1 1h4v4H1z" stroke="#fff" fill="none" /></svg>
            </WindowButton>
            <WindowButton $close aria-label="Schließen">
              <svg width="6" height="6"><path d="M1 1l4 4M5 1L1 5" stroke="#fff" /></svg>
            </WindowButton>
          </WindowButtons>
        </TitleBar>

        <MenuBar>
          {MENU.map(([label, w]) => (
            <MenuTab key={label} $w={w} $active={label === 'Stahlbau'}>{label}</MenuTab>
          ))}
          <MenuTools>
            <span>–</span>
            <Mini kind="page" />
            <Caret $color="#ddd" />
            <svg width="9" height="9" viewBox="0 0 10 10">
              <circle cx="5" cy="5" r="4" fill="#3a80d0" stroke="#d4e4f8" />
              <circle cx="5" cy="5" r="1" fill="#fff" />
            </svg>
          </MenuTools>
        </MenuBar>

        <Ribbon />

        <Main>
          <Dock>
            <DockPanel
              title="Ansichten"
              share={296}
              tools={['collapse', 'collapse', 'cone']}
              tabs={['Ansichten', 'Konstruktionswechsel']}
              active="Ansichten"
            >
              <Tree $trunk="42px">
                <TreeRow $indent={2}>
                  <Expander aria-label="Zuklappen"><PlusBox open /></Expander>
                  <TreeIcon $w={10}><Mini kind="model" /></TreeIcon>
                  3D-Modell
                </TreeRow>
                <TreeRow $indent={23}>
                  <TreeIcon $w={11}><Mini kind="view" /></TreeIcon>
                  <ViewLink href="#ansicht-1">Ansicht 1</ViewLink>
                </TreeRow>
                {['Blatt 1', 'Blatt 2', 'Blatt 3'].map((sheet) => (
                  <TreeRow key={sheet} $indent={2}>
                    <Expander aria-label={sheet}><PlusBox /></Expander>
                    <TreeIcon $w={10}><Mini kind="sheet" /></TreeIcon>
                    {sheet}
                  </TreeRow>
                ))}
              </Tree>
            </DockPanel>

            <DockPanel
              title="3D-Teilestruktur"
              share={201}
              tools={['doc', 'scissors', 'copy', 'bag', 'copy', 'bag', 'collapse', '2', '3', 'collapse', 'sort']}
              tabs={['2D-Teilestruktur', '3D-Teilestruktur']}
              active="3D-Teilestruktur"
            >
              <Tree $trunk="100%">
                <TreeRow>
                  <TreeIcon $w={11}><Mini kind="root" /></TreeIcon>
                  <TreeLabel>GASMISCHER B</TreeLabel>
                </TreeRow>
                {PARTS.map(([label, icon, state], i) => (
                  <TreeRow key={i} $indent={icon === 'group' ? 2 : 11} $faint={state === 'faint'}>
                    {icon === 'group' && <Expander aria-label={label}><PlusBox /></Expander>}
                    <TreeIcon $w={icon === 'group' ? 16 : 18}><Mini kind={icon} /></TreeIcon>
                    <TreeLabel $selected={state === 'selected'}>{label}</TreeLabel>
                  </TreeRow>
                ))}
              </Tree>
              <ScrollBar>
                <UpCaret />
                <Thumb>≡</Thumb>
                <DownCaret />
              </ScrollBar>
            </DockPanel>

            <DockPanel
              title="Feature"
              share={198}
              last
              tools={['collapse', '2', '3', 'collapse']}
              tabs={['Feature', 'HCM', 'Grafik', 'Eigenschaften']}
              active="Feature"
            >
              <Tree $trunk="32px">
                {FEATURES.map(([label, icon]) => (
                  <TreeRow key={label} $indent={3} $bold>
                    <Expander aria-label={label}><PlusBox /></Expander>
                    <TreeIcon $w={14}><Mini kind={icon} /></TreeIcon>
                    {label}
                  </TreeRow>
                ))}
                <TreeRow $indent={14} $bold>
                  <TreeIcon $w={14}><Mini kind="insert" size={11} /></TreeIcon>
                  (2) --- Einfügeposition ---
                </TreeRow>
              </Tree>
            </DockPanel>
          </Dock>

          <Viewport>
            <ModelScene />
            <ViewTools>
              {VIEW_TOOLS.map(([kind, gap], i) => (
                <ViewTool key={i} $gap={gap} aria-label={`Ansicht ${kind}`}>
                  <Mini kind={kind} size={10} />
                </ViewTool>
              ))}
            </ViewTools>
          </Viewport>

          <SideTabs>
            {SIDE.map(([label, h]) => (
              <SideTab key={label} $h={h}>{label}</SideTab>
            ))}
          </SideTabs>
        </Main>

        <BottomBar>
          <BottomTools>
            <Prompt readOnly aria-label="Eingabe" value="Funktion/ Objekt auswählen (RMT=weitere Auswahl)" />
            <Grip />
            <BarButton $wide aria-label="Ebene">
              <svg width="18" height="12" viewBox="0 0 18 12">
                <path d="M2 10L6 2h10l-4 8z" fill="#fff" stroke="#333" />
              </svg>
              <Caret />
            </BarButton>
            <Separator />
            <SwatchButton aria-label="Farbe">
              <Swatch />
              <Caret />
            </SwatchButton>
            <SelectBox>
              <Select $w={76} $line aria-label="Linienart"><option /></Select>
              <SelectArrow><Caret /></SelectArrow>
            </SelectBox>
            <SelectBox>
              <Select $w={18} aria-label="Linienstärke"><option>1</option></Select>
              <SelectArrow><Caret /></SelectArrow>
            </SelectBox>
            <BarButton aria-label="Stift">
              <svg width="14" height="12" viewBox="0 0 14 12">
                <path d="M2 4h4M2 7h3M6 10l6-7" stroke="#444" strokeWidth="2" />
              </svg>
            </BarButton>
            <Grip />
            <DimBar />
          </BottomTools>
        </BottomBar>

        <StatusBar>
          <StatusCell>Teil : 2147481456</StatusCell>
          <StatusCell>Ansicht : Ansicht 1 1:10</StatusCell>
          <StatusCell>Maßstab : 1:10</StatusCell>
          <StatusCell>(X=2962.586, Y=-11495.832, Z=1844.593)</StatusCell>
        </StatusBar>
      </Window>
    </Screen>
    <TaskBar>
      {['#e8e8e8', '#c8402c', '#f0d070', '#70b0d8', '#a0d8f0', '#4898d0', '#f0d060', '#c81850', '#2870a0', '#c81850'].map((c, i) => (
        <Task key={i} $c={c} />
      ))}
      <Clock>19:07</Clock>
    </TaskBar>
  </Desktop>
);

export default App;
